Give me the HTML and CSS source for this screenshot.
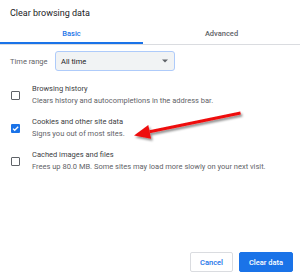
FILE: index.html
```html
<!DOCTYPE html>
<html>
<head>
<meta charset="utf-8">
<link rel="stylesheet" href="styles.css">
</head>
<body>
<div class="dialog">
  <h1 class="title">Clear browsing data</h1>
  <div class="tabs">
    <div class="tab tab-active">Basic</div>
    <div class="tab">Advanced</div>
  </div>
  <div class="content">
    <div class="time-row">
      <span class="time-label">Time range</span>
      <div class="select">
        <span>All time</span>
        <svg class="caret" width="6" height="4" viewBox="0 0 6 4"><path d="M0 0.5h6L3 3.5z" fill="#5f6368"/></svg>
      </div>
    </div>
    <div class="items">
      <div class="item">
        <span class="checkbox"></span>
        <div class="item-text">
          <div class="item-title">Browsing history</div>
          <div class="item-sub">Clears history and autocompletions in the address bar.</div>
        </div>
      </div>
      <div class="item">
        <span class="checkbox checked">
          <svg width="9" height="9" viewBox="0 0 9 9"><path d="M2 4.6l1.7 1.7L7.2 2.8" fill="none" stroke="#fff" stroke-width="1.3"/></svg>
        </span>
        <div class="item-text">
          <div class="item-title">Cookies and other site data</div>
          <div class="item-sub">Signs you out of most sites.</div>
        </div>
      </div>
      <div class="item">
        <span class="checkbox"></span>
        <div class="item-text">
          <div class="item-title">Cached images and files</div>
          <div class="item-sub">Frees up 80.0 MB. Some sites may load more slowly on your next visit.</div>
        </div>
      </div>
    </div>
  </div>
  <div class="footer">
    <button class="btn btn-cancel">Cancel</button>
    <button class="btn btn-primary">Clear data</button>
  </div>
  <svg class="arrow" width="300" height="276" viewBox="0 0 300 276">
    <defs>
      <filter id="sh" x="-20%" y="-50%" width="140%" height="200%">
        <feDropShadow dx="1.5" dy="2" stdDeviation="1.2" flood-color="#000" flood-opacity="0.45"/>
      </filter>
    </defs>
    <g filter="url(#sh)" fill="#ee1111" stroke="none">
      <path d="M240.3 111.6 L240.9 114.6 L149.8 133.3 L149.2 130.3 Z"/>
      <path d="M134 135.5 L148.3 124.9 L151.1 138.7 Z"/>
    </g>
  </svg>
</div>
</body>
</html>
```

FILE: styles.css
```css
html, body {
  margin: 0;
  padding: 0;
  background: #fff;
}
body {
  width: 300px;
  height: 276px;
  overflow: hidden;
  font-family: Roboto, "Liberation Sans", sans-serif;
  color: #202124;
}
.dialog {
  position: relative;
  height: 100%;
  display: flex;
  flex-direction: column;
}
.title {
  margin: 0;
  padding: 7px 10px 0;
  font-size: 9px;
  font-weight: 400;
  line-height: 12px;
  color: #202124;
}
.tabs {
  display: flex;
  margin-top: 8px;
  border-bottom: 1px solid #dadce0;
}
.tab {
  flex: 1;
  height: 17px;
  line-height: 14px;
  text-align: center;
  font-size: 7.5px;
  font-weight: 500;
  color: #5f6368;
}
.tab-active {
  flex: 0 0 143px;
  color: #1a73e8;
  box-shadow: inset 0 -2px #1a73e8;
}
.content {
  padding: 0 10px;
}
.time-row {
  display: flex;
  align-items: center;
  margin-top: 6px;
}
.time-label {
  width: 45px;
  font-size: 7.5px;
  color: #5f6368;
}
.select {
  box-sizing: border-box;
  width: 120px;
  height: 20px;
  display: flex;
  align-items: center;
  justify-content: space-between;
  padding: 0 6px 0 5px;
  background: #f1f3f4;
  border: 1px solid #aecbfa;
  border-radius: 3px;
  font-size: 7.5px;
  color: #202124;
}
.caret {
  display: block;
}
.items {
  margin-top: 7px;
}
.item {
  display: flex;
  align-items: center;
  padding: 5px 0 4px;
}
.checkbox {
  box-sizing: border-box;
  flex: 0 0 9px;
  width: 9px;
  height: 9px;
  margin-left: 1px;
  margin-right: 12px;
  border: 1.4px solid #5f6368;
  border-radius: 1px;
  display: flex;
}
.checkbox.checked {
  border: none;
  background: #1a73e8;
}
.item-title,
.item-sub {
  font-size: 7.5px;
  line-height: 12px;
  white-space: nowrap;
}
.item-title {
  color: #3c4043;
}
.item-sub {
  color: #5f6368;
}
.footer {
  margin-top: auto;
  display: flex;
  justify-content: flex-end;
  gap: 6px;
  padding: 0 7px 4px 0;
}
.btn {
  box-sizing: border-box;
  height: 20px;
  border-radius: 2px;
  font-family: Roboto, "Liberation Sans", sans-serif;
  font-size: 7.5px;
  font-weight: 500;
  padding: 0;
  cursor: pointer;
}
.btn-cancel {
  width: 43px;
  background: #fff;
  border: 1px solid #dadce0;
  color: #1a73e8;
}
.btn-primary {
  width: 54px;
  background: #1a73e8;
  border: 1px solid #1a73e8;
  color: #fff;
}
.arrow {
  position: absolute;
  left: 0;
  top: 0;
  pointer-events: none;
}
```
